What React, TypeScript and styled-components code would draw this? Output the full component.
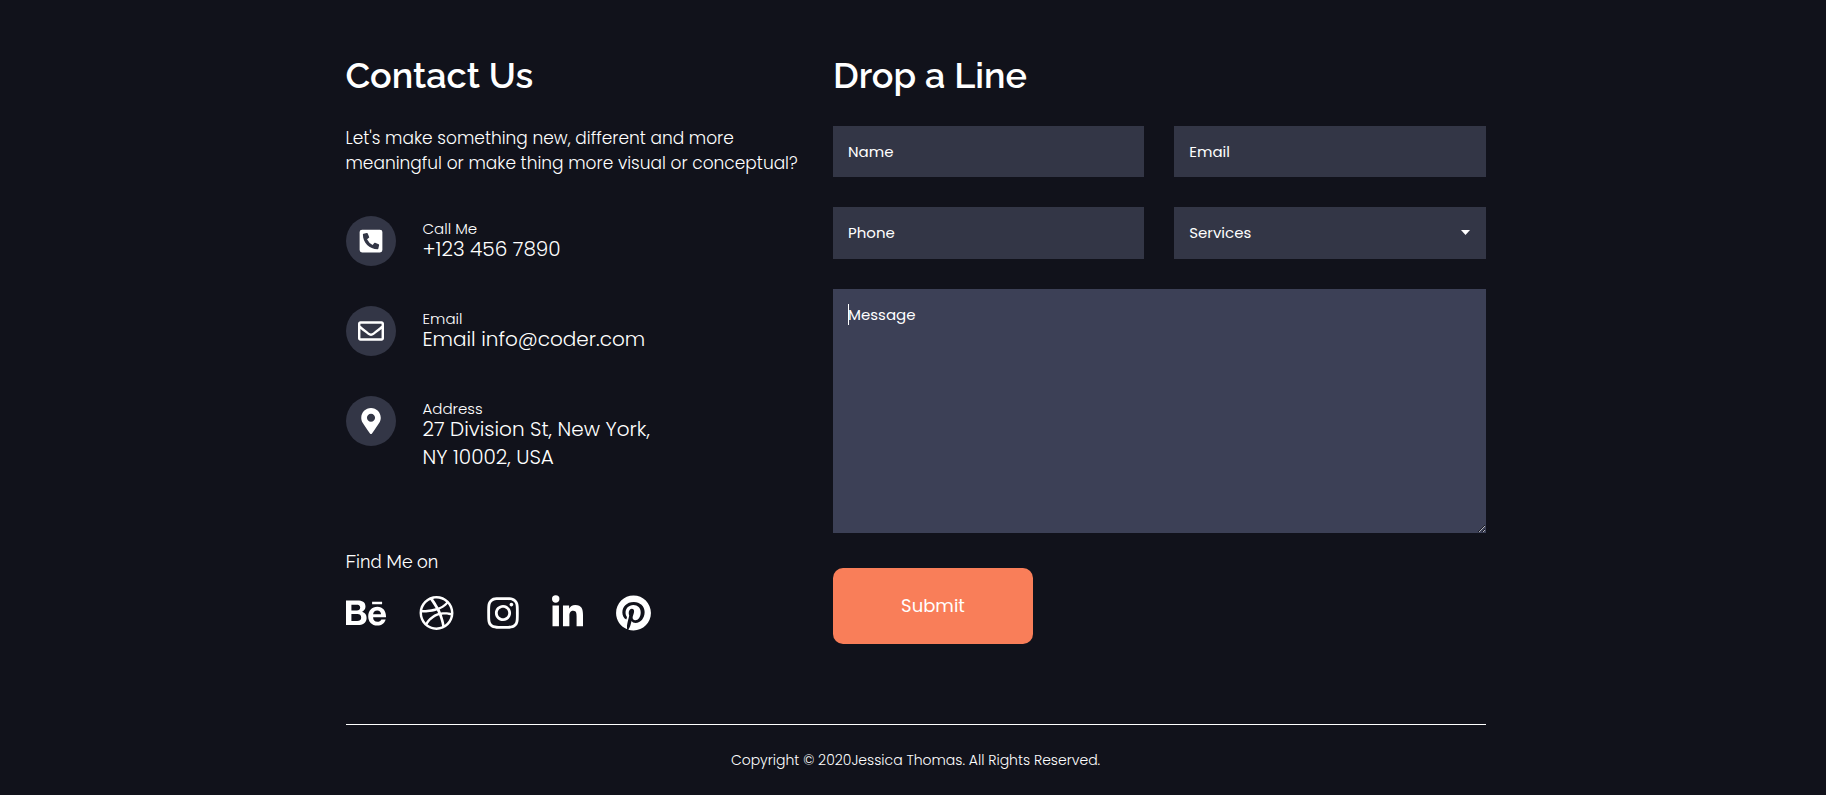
import React from 'react';
import styled, { createGlobalStyle } from 'styled-components';
import {
  FaBehance,
  FaDribbble,
  FaInstagram,
  FaLinkedinIn,
  FaMapMarkerAlt,
  FaPhoneSquareAlt,
  FaPinterest,
  FaRegEnvelope,
} from 'react-icons/fa';

const bodyFont = `Poppins, Inter, "Open Sans", sans-serif`;
const headingFont = `Raleway, Inter, "Open Sans", sans-serif`;

const GlobalStyle = createGlobalStyle`
  *, *::before, *::after { box-sizing: border-box; }
  body {
    margin: 0;
    background: #11121b;
    color: #fff;
    font-family: ${bodyFont};
    font-weight: 300;
  }
`;

const Page = styled.div`
  padding: 55px 12px 20px 17px;
`;

const Container = styled.div`
  max-width: 1140px;
  margin: 0 auto;
`;

const Columns = styled.main`
  display: grid;
  grid-template-columns: 5fr 7fr;
  gap: 30px;
  @media (max-width: 900px) {
    grid-template-columns: 1fr;
  }
`;

const ContactColumn = styled.section`
  min-width: 0;
`;

const FormColumn = styled.section`
  min-width: 0;
  @media (min-width: 901px) {
    margin-left: -5px;
  }
`;

const Title = styled.h2`
  margin: 0 0 31px;
  font: 600 36px/40px ${headingFont};
`;

const Intro = styled.p`
  margin: 0;
  font-size: 17px;
  line-height: 25px;
  white-space: pre-line;
`;

const ContactList = styled.ul`
  list-style: none;
  margin: 40px 0 0;
  padding: 0;
  display: grid;
  gap: 40px;
`;

const ContactItem = styled.li`
  display: flex;
  align-items: flex-start;
  gap: 27px;
  height: 50px;
`;

const Badge = styled.span`
  flex: none;
  display: flex;
  align-items: center;
  justify-content: center;
  width: 50px;
  height: 50px;
  border-radius: 50%;
  background: #333646;
  font-size: 26px;
`;

const Details = styled.div`
  padding-top: 7px;
`;

const Label = styled.div`
  font-size: 15px;
  line-height: 12px;
`;

const Value = styled.div`
  font-size: 20px;
  line-height: 28px;
  white-space: pre-line;
`;

const FindMe = styled.h3`
  margin: 104px 0 0;
  font: 400 18px/24px ${headingFont};
`;

const SocialLinks = styled.nav`
  display: flex;
  gap: 33px;
  margin-top: 21px;
`;

const SocialLink = styled.a<{ $width: number }>`
  display: flex;
  color: #fff;
  font-size: 36px;
  svg {
    width: ${({ $width }) => $width}px;
  }
`;

const Form = styled.form`
  display: grid;
  grid-template-columns: 1fr 1fr;
  gap: 30px;
`;

const fieldStyle = `
  display: block;
  width: 100%;
  margin: 0;
  border: 0;
  border-radius: 0;
  outline: 0;
  padding: 14px 15px;
  background: #333646;
  color: #fff;
  font: 400 15px/24px ${bodyFont};
  &::placeholder { color: #fff; opacity: 1; }
`;

const Input = styled.input`
  ${fieldStyle}
  height: 100%;
  min-height: 51px;
  padding: 13px 15px 14px;
`;

const SelectWrap = styled.div`
  position: relative;
`;

const Select = styled.select`
  ${fieldStyle}
  height: 52px;
  appearance: none;
`;

const Arrow = styled.svg`
  position: absolute;
  right: 16px;
  top: 23px;
  pointer-events: none;
`;

const MessageWrap = styled.div`
  position: relative;
  grid-column: 1 / -1;
`;

const Message = styled.textarea`
  ${fieldStyle}
  height: 244px;
  background: #3c4056;
  caret-color: transparent;
  resize: both;
`;

const TextCursor = styled.span`
  position: absolute;
  top: 15px;
  left: 15px;
  width: 1px;
  height: 21px;
  background: #fff;
  pointer-events: none;
  textarea:not(:placeholder-shown) + & {
    display: none;
  }
`;

const Submit = styled.button`
  justify-self: start;
  width: 200px;
  height: 76px;
  margin-top: 5px;
  border: 0;
  border-radius: 10px;
  background: #f97e59;
  color: #fff;
  font: 400 18px/24px ${bodyFont};
`;

const Footer = styled.footer`
  margin-top: 80px;
  border-top: 1px solid #fff;
  padding-top: 23px;
  text-align: center;
  font-size: 14px;
  line-height: 24px;
`;

const contacts = [
  { label: 'Call Me', value: '+123 456 7890', Icon: FaPhoneSquareAlt },
  { label: 'Email', value: 'Email info@coder.com', Icon: FaRegEnvelope },
  { label: 'Address', value: '27 Division St, New York,\nNY 10002, USA', Icon: FaMapMarkerAlt },
];

const socials = [
  { name: 'Behance', Icon: FaBehance, width: 40 },
  { name: 'Dribbble', Icon: FaDribbble, width: 35 },
  { name: 'Instagram', Icon: FaInstagram, width: 32 },
  { name: 'LinkedIn', Icon: FaLinkedinIn, width: 31 },
  { name: 'Pinterest', Icon: FaPinterest, width: 35 },
];

export default function App() {
  return (
    <Page>
      <GlobalStyle />
      <Container>
        <Columns>
          <ContactColumn>
            <Title>Contact Us</Title>
            <Intro>
              {"Let's make something new, different and more\nmeaningful or make thing more visual or conceptual?"}
            </Intro>
            <ContactList>
              {contacts.map(({ label, value, Icon }) => (
                <ContactItem key={label}>
                  <Badge>
                    <Icon />
                  </Badge>
                  <Details>
                    <Label>{label}</Label>
                    <Value>{value}</Value>
                  </Details>
                </ContactItem>
              ))}
            </ContactList>
            <FindMe>Find Me on</FindMe>
            <SocialLinks>
              {socials.map(({ name, Icon, width }) => (
                <SocialLink key={name} href="#" aria-label={name} $width={width}>
                  <Icon />
                </SocialLink>
              ))}
            </SocialLinks>
          </ContactColumn>
          <FormColumn>
            <Title>Drop a Line</Title>
            <Form>
              <Input type="text" placeholder="Name" aria-label="Name" />
              <Input type="email" placeholder="Email" aria-label="Email" />
              <Input type="tel" placeholder="Phone" aria-label="Phone" />
              <SelectWrap>
                <Select aria-label="Services">
                  <option>Services</option>
                </Select>
                <Arrow width="9" height="5" viewBox="0 0 9 5">
                  <path d="M0 0h9L4.5 5z" fill="#fff" />
                </Arrow>
              </SelectWrap>
              <MessageWrap>
                <Message placeholder="Message" aria-label="Message" />
                <TextCursor />
              </MessageWrap>
              <Submit type="button">Submit</Submit>
            </Form>
          </FormColumn>
        </Columns>
        <Footer>Copyright © 2020Jessica Thomas. All Rights Reserved.</Footer>
      </Container>
    </Page>
  );
}
